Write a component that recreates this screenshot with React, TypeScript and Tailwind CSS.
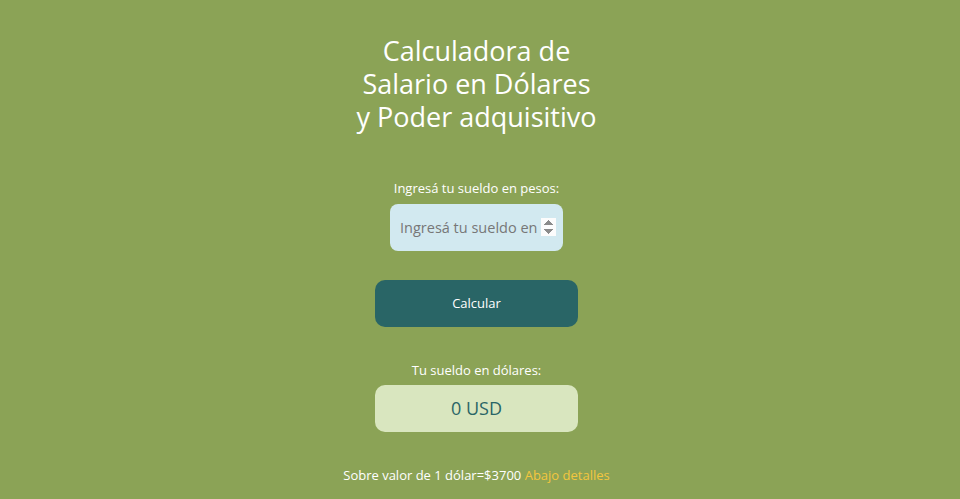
import { useState } from "react";

const DOLAR = 3700;

export default function App() {
  const [sueldo, setSueldo] = useState("");
  const [usd, setUsd] = useState(0);

  return (
    <div
      className="min-h-screen w-full bg-[#8ba356] flex flex-col items-center pr-[7px] text-white"
      style={{ fontFamily: '"Open Sans", sans-serif' }}
    >
      <h1 className="mt-[34px] text-center text-[27px] leading-[33px] font-normal">
        Calculadora de
        <br />
        Salario en Dólares
        <br />y Poder adquisitivo
      </h1>

      <label className="mt-[46px] text-[13px] leading-[18px]">
        Ingresá tu sueldo en pesos:
      </label>
      <input
        type="number"
        value={sueldo}
        onChange={(e) => setSueldo(e.target.value)}
        placeholder="Ingresá tu sueldo en pesos"
        className="mt-[7px] h-[47px] w-[173px] rounded-lg bg-[#d2e9f0] pl-[10px] pr-[7px] text-[14.5px] text-[#333] placeholder:text-[#777] outline-none [&::-webkit-inner-spin-button]:opacity-100"
      />

      <button
        onClick={() => setUsd(Math.round((Number(sueldo) || 0) / DOLAR))}
        className="mt-[29px] h-[47px] w-[203px] rounded-[10px] bg-[#296566] text-[13px] text-white"
      >
        Calcular
      </button>

      <p className="mt-[34px] text-[13px] leading-[18px]">Tu sueldo en dólares:</p>
      <div className="mt-[6px] flex h-[47px] w-[203px] items-center justify-center rounded-[10px] bg-[#d9e6bf] text-[18px] text-[#296566]">
        {usd} USD
      </div>

      <p className="mt-[34px] text-[13px] leading-[18px]">
        Sobre valor de 1 dólar=${DOLAR} <span className="text-[#f3c63e]">Abajo detalles</span>
      </p>
    </div>
  );
}
